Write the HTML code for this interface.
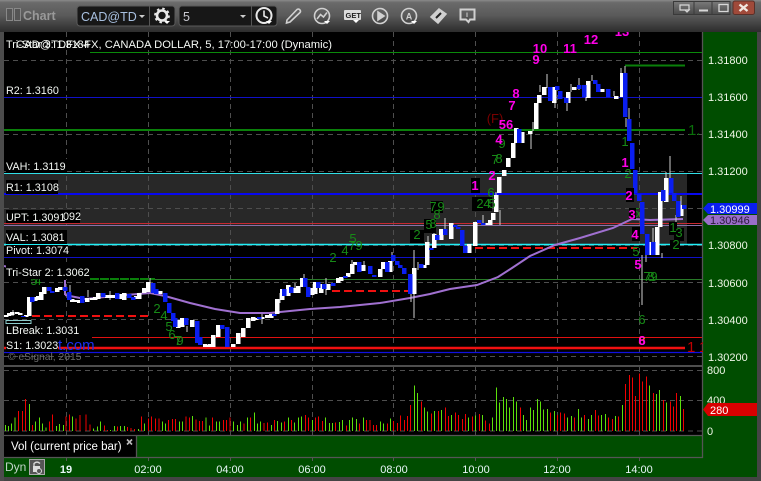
<!DOCTYPE html>
<html><head><meta charset="utf-8"><style>
html,body{margin:0;padding:0;background:#444;width:761px;height:481px;overflow:hidden}
svg{display:block;font-family:"Liberation Sans",Arial,sans-serif}
.l{font-size:10.8px;fill:#f4f8f4}
.a{font-size:11px;fill:#eef6e6}
.t{font-size:11px;fill:#e8f6f8;text-anchor:middle}
.m{font-size:13px;font-weight:bold;fill:#ff00e8;text-anchor:middle}
.g{font-size:13px;fill:#178a17;text-anchor:middle}
</style></head><body>
<svg width="761" height="481" viewBox="0 0 761 481" xmlns="http://www.w3.org/2000/svg">
<defs>
<linearGradient id="tb" x1="0" y1="0" x2="0" y2="1"><stop offset="0" stop-color="#8a8a8a"/><stop offset=".08" stop-color="#6a6a6a"/><stop offset=".48" stop-color="#5a5a5a"/><stop offset=".5" stop-color="#585858"/><stop offset="1" stop-color="#2c2c2c"/></linearGradient>
<linearGradient id="wb" x1="0" y1="0" x2="0" y2="1"><stop offset="0" stop-color="#7a7a7a"/><stop offset="1" stop-color="#4a4a4a"/></linearGradient>
<clipPath id="main"><rect x="4" y="32" width="699" height="333"/></clipPath>
</defs>
<rect width="761" height="481" fill="#444"/>
<rect width="761" height="32" fill="url(#tb)"/>
<rect x="0" y="32" width="4" height="449" fill="#4c4c4c"/>
<!-- plot -->
<rect x="4" y="32" width="699" height="333" fill="#000"/>
<rect x="4" y="367" width="699" height="68" fill="#000"/>
<rect x="703" y="32" width="54" height="445" fill="#004d00"/>
<rect x="4" y="458" width="699" height="19" fill="#004d00"/>
<rect x="137" y="436" width="566" height="21" fill="#004d00"/>
<rect x="4" y="436" width="132" height="21" fill="#000"/>
<path d="M4 366H703M4 435.5H703M136.5 436V457M4 457.5H703M702.5 32V458" stroke="#555" stroke-width="1.3" fill="none"/>
<g clip-path="url(#main)">
<rect x="4" y="173" width="683" height="72" fill="#282828"/>
<!-- grid -->
<path d="M4 60.5H703M4 134.5H703M4 171.5H703M4 208.5H703M4 245.5H703M4 282.5H703M4 319.5H703M4 356.5H703M66.5 32V366M148.5 32V366M230.5 32V366M312.5 32V366M393.5 32V366M475.5 32V366M557.5 32V366M639.5 32V366" stroke="#4e4e4e" stroke-width="1" stroke-dasharray="5 4" fill="none"/>
<!-- levels -->
<path d="M90 52.5H702" stroke="#0a8a0a"/>
<path d="M4 97.5H702" stroke="#1010c8"/>
<path d="M4 130H685" stroke="#0a800a" stroke-width="2"/>
<path d="M625 65.5H685" stroke="#0a800a" stroke-width="2"/>
<path d="M4 173.5H702" stroke="#30e0e8"/>
<path d="M4 194H702" stroke="#0808f0" stroke-width="2"/>
<path d="M4 223.5H702" stroke="#c82830"/>
<path d="M4 225.5H702" stroke="#8a70a8"/>
<path d="M4 244.5H702" stroke="#20f0f8" stroke-width="1.6"/>
<path d="M4 257.5H702" stroke="#1010c8"/>
<path d="M155 279.5H702" stroke="#287a28"/>
<path d="M90 279H155" stroke="#0a800a" stroke-width="2" stroke-dasharray="9 1"/>
<path d="M92 337.5H702" stroke="#e01010"/>
<path d="M4 348H685" stroke="#f01010" stroke-width="2.4"/>
<path d="M4 352.5H702" stroke="#1010e0" stroke-width="1.2"/>
<path d="M32 316H152M332 291H408M475 248H637" stroke="#f01010" stroke-width="2" stroke-dasharray="8 4"/>
<!-- MA -->
<path d="M4 266L8 267M65 280V295M65 295L85 299L105 297L125 295L150 293L165 296L190 303L215 309L240 313L270 313L290 311L310 309L340 307L380 303L410 298L430 294L450 289L477 285L498 277L512 268L530 256L555 245L580 238L613 228L632 219L650 220L683 219" stroke="#a070d0" stroke-width="2" fill="none"/>
<!-- wicks -->
<path shape-rendering="crispEdges" d="M13 310V316M70 285V292M88 290V297M150 278V283M110 291V300M187 326V332M326 278V295M411 294V302M414 250V318M434 223V234M445 218V232M280 293V303M295 283V288M352 260V266M364 261V265M392 252V256M418 262V270M428 236V242M500 210V225M483 215V224M262 314V324M304 274V280M531 133V149M533 122V131M547 74V88M540 85V92M555 103V108M567 103V111M571 84V92M579 78V90M592 75V81M586 97V101M614 91V96M625 66V73M621 68V74M629 108V119M626 118V127M642 255V305M646 234V262M653 228V242M670 156V178M666 172V180M676 215V231M681 196V206M639 234V240M662 253V258M496 192V196" stroke="#d0d0d0" stroke-width="1" fill="none"/>
<!-- white bodies -->
<path shape-rendering="crispEdges" d="M6 315V317M9 313V316M12 312V315M17 312V314M20 313V315M26 315V317M29 297V316M35 297V301M38 296V300M41 292V300M44 287V294M57 288V292M60 287V290M72 299V302M76 300V302M79 300V303M87 298V302M92 298V300M95 297V300M98 293V299M107 295V298M110 295V298M113 295V298M120 294V299M124 293V300M136 296V299M139 293V299M144 288V293M148 282V292M160 291V294M178 320V328M182 318V327M192 320V327M205 344V347M207 345V347M210 344V347M213 335V347M218 325V337M233 344V347M238 333V344M243 328V337M248 318V328M253 317V321M256 318V320M262 317V319M267 315V318M271 314V318M277 299V314M282 289V300M288 285V296M295 288V293M298 286V293M302 278V287M312 288V295M315 282V294M321 284V293M328 284V290M338 278V283M341 277V281M348 273V277M352 264V274M355 262V265M363 265V271M380 269V277M383 262V269M390 261V272M414 268V294M424 265V268M427 242V265M434 234V248M441 229V240M451 223V239M469 244V253M475 222V246M486 223V225M490 220V225M493 213V220M496 195V212M499 177V193M504 170V176M508 158V167M513 143V158M516 128V143M522 132V143M530 131V134M536 103V129M539 95V103M544 87V95M554 87V103M568 92V103M574 87V90M588 81V98M602 89V92M616 96V99M622 73V97M650 242V255M657 227V255M660 192V227M666 178V202M681 205V216" stroke="#fff" stroke-width="4.5" fill="none"/>
<!-- blue bodies -->
<path shape-rendering="crispEdges" d="M23 316V317M32 297V302M49 287V291M52 291V293M65 287V291M69 292V300M82 296V303M103 293V297M117 293V299M129 294V298M133 297V300M153 283V293M156 289V294M165 293V302M169 303V313M173 313V321M175 318V327M186 318V325M197 321V343M200 337V345M222 325V329M227 327V347M259 317V319M274 314V316M284 289V296M291 287V293M305 278V287M308 287V297M318 282V288M324 284V289M333 283V286M345 276V278M359 262V272M370 266V274M374 275V277M387 262V272M393 255V261M397 261V265M400 265V268M404 268V274M410 274V294M421 264V268M431 248V250M437 235V240M445 229V235M455 225V227M458 227V229M462 230V246M465 246V253M479 220V223M483 223V225M519 129V143M550 87V101M557 86V90M560 91V99M566 98V103M579 85V89M584 85V97M595 80V84M598 84V92M608 89V97M625 73V117M629 119V141M632 143V169M635 170V193M639 194V201M642 202V234M647 234V255M653 242V255M663 190V201M671 178V193M674 193V201M678 201V217M684 205V209" stroke="#0a1ef0" stroke-width="4.5" fill="none"/>
<!-- green digits -->
<g class="g">
<rect x="431" y="201" width="12" height="12" fill="#000"/><rect x="410" y="230" width="14" height="13" fill="#000"/><rect x="472" y="197" width="20" height="14" fill="#000"/><rect x="424" y="219" width="12" height="14" fill="#000"/>
<text x="34" y="285">5</text><text x="38" y="285">4</text><text x="157" y="313">2</text><text x="164" y="320">4</text><text x="169" y="331">5</text><text x="172" y="339">6</text><text x="178" y="345">7</text><text x="180" y="345">9</text>
<text x="333" y="262">2</text><text x="345" y="255">4</text><text x="353" y="243">5</text><text x="352" y="250">7</text><text x="359" y="250">9</text>
<text x="417" y="239">2</text><text x="429" y="229">5</text><text x="433" y="228">8</text><text x="433" y="211">7</text><text x="441" y="211">9</text><text x="437" y="219">8</text>
<text x="480" y="208">2</text><text x="487" y="208">4</text><text x="492" y="208">5</text><text x="491" y="197">6</text><text x="495" y="164">7</text><text x="499" y="163">8</text><text x="502" y="148">9</text>
<text x="625" y="146">1</text><text x="628" y="178">2</text><text x="632" y="197">4</text><text x="636" y="217">5</text><text x="636" y="256">5</text>
<text x="642" y="324">6</text><text x="647" y="281">7</text><text x="651" y="281">8</text><text x="654" y="281">9</text>
</g>
<rect x="669" y="222" width="8" height="13" fill="#000"/><rect x="674" y="228" width="10" height="13" fill="#000"/><rect x="670" y="240" width="10" height="12" fill="#000"/>
<g class="g"><text x="673" y="232">1</text><text x="679" y="237">3</text><text x="676" y="249">2</text></g>
<text x="688" y="135" font-size="15" fill="#0a700a">1.</text>
<text x="687" y="352" font-size="15" fill="#c00000">1</text>
<text x="699" y="352" font-size="15" fill="#c00000">1</text>
<text x="495" y="123" font-size="13" fill="#7a0000" text-anchor="middle">(F)</text>
<!-- magenta digits -->
<rect x="471" y="178" width="9" height="15" fill="#000"/><rect x="626" y="188" width="8" height="14" fill="#000"/><rect x="629" y="208" width="7" height="11" fill="#000"/><rect x="632" y="227" width="8" height="14" fill="#000"/>
<g class="m">
<text x="540" y="53">10</text><text x="536" y="64">9</text><text x="570" y="53">11</text><text x="591" y="44">12</text><text x="622" y="36">13</text><text x="516" y="98">8</text><text x="512" y="110">7</text><text x="506" y="129">56</text><text x="499" y="144">4</text><text x="492" y="180">2</text><text x="475" y="190">1</text><text x="625" y="167">1</text><text x="629" y="200">2</text><text x="632" y="219">3</text><text x="635" y="239">4</text><text x="638" y="269">5</text>
<text x="642" y="345" style="fill:#f07000">8</text><text x="642" y="345">6</text>
</g>
<!-- left labels -->
<g fill="#000"><rect x="6" y="159" width="61" height="14"/><rect x="6" y="180" width="52" height="14"/><rect x="6" y="210" width="74" height="13"/><rect x="6" y="230" width="61" height="14"/><rect x="6" y="245" width="62" height="12"/><rect x="6" y="265" width="84" height="14"/><rect x="6" y="323" width="73" height="14"/><rect x="6" y="338" width="52" height="14"/></g>
<text x="6" y="48" class="l">Tri-Star 3: 1.3184</text>
<text x="16" y="48" class="l" textLength="316" lengthAdjust="spacingAndGlyphs">CAD@TDFX-FX, CANADA DOLLAR, 5, 17:00-17:00 (Dynamic)</text>
<text x="6" y="94" class="l">R2: 1.3160</text>
<text x="6" y="170" class="l">VAH: 1.3119</text>
<text x="6" y="191" class="l">R1: 1.3108</text>
<text x="6" y="221" class="l">UPT: 1.3091</text>
<text x="63" y="220" class="l">092</text>
<text x="6" y="241" class="l">VAL: 1.3081</text>
<text x="6" y="254" class="l">Pivot: 1.3074</text>
<text x="6" y="276" class="l">Tri-Star 2: 1.3062</text>
<path d="M6 320.500H31V323.500H6Z" fill="none" stroke="#8ccccc"/>
<text x="6" y="334" class="l">LBreak: 1.3031</text>
<text x="6" y="349" class="l">S1: 1.3023</text>
<text x="58" y="350" font-size="15" fill="#1a2ef0">t.com</text>
<text x="8" y="360" font-size="10.300" fill="#6c6c6c">© eSignal, 2015</text>
</g>
<!-- volume grid -->
<path d="M4 370.500H703M4 400.500H703M4 431H703M66.500 367V435M148.500 367V435M230.500 367V435M312.500 367V435M393.500 367V435M475.500 367V435M557.500 367V435M639.500 367V435" stroke="#4e4e4e" stroke-dasharray="5 4" fill="none"/>
<!-- volume bars in 3x coordinates -->
<g transform="translate(0,365) scale(.33333)" stroke-width="3.300" fill="none" shape-rendering="crispEdges">
<path stroke="#f00000" d="M55 138V198M67 138V198M76 102V198M98 180V198M148 170V198M157 148V198M198 155V198M208 148V198M228 160V198M240 150V198M258 148V198M270 178V198M313 182V198M323 195V198M352 184V198M382 186V198M393 189V198M403 192V198M425 155V198M445 160V198M455 155V198M466 160V198M477 160V198M505 165V198M518 162V198M527 162V198M558 155V198M568 157V198M588 163V198M598 168V198M608 168V198M638 158V198M670 165V198M680 165V198M690 158V198M732 175V198"/>
<path stroke="#5ce00a" d="M16 180V198M25 183V198M34 175V198M45 158V198M88 117V198M107 170V198M118 158V198M128 175V198M138 188V198M169 183V198M178 177V198M190 180V198M218 155V198M280 190V198M292 185V198M302 170V198M332 195V198M343 183V198M362 183V198M373 183V198M415 192V198M434 175V198M487 170V198M497 175V198M538 170V198M548 170V198M577 153V198M618 158V198M628 182V198M650 170V198M658 170V198M700 170V198M712 180V198M722 170V198M743 158V198"/>
</g>
<g transform="translate(250,365) scale(.33333)" stroke-width="3.300" fill="none" shape-rendering="crispEdges">
<path stroke="#f00000" d="M2 158V198M42 174V198M52 173V198M73 165V198M103 170V198M125 165V198M166 150V198M176 158V198M197 158V198M206 155V198M217 168V198M257 173V198M289 182V198M328 176V198M349 165V198M360 165V198M370 180V198M380 180V198M412 176V198M431 168V198M442 174V198M452 152V198M463 165V198M472 153V198M482 120V198M514 110V198M545 146V198M565 138V198M586 128V198M595 153V198M616 142V198M626 150V198M637 162V198M646 147V198M667 155V198M688 147V198M706 167V198M718 175V198"/>
<path stroke="#5ce00a" d="M13 143V198M22 175V198M32 170V198M64 180V198M83 168V198M94 173V198M115 158V198M134 173V198M145 158V198M155 155V198M187 165V198M226 158V198M238 174V198M248 174V198M268 171V198M277 165V198M298 165V198M308 158V198M319 162V198M340 158V198M391 170V198M400 176V198M421 161V198M493 62V198M503 84V198M524 128V198M533 140V198M553 138V198M574 135V198M605 150V198M656 158V198M677 152V198M697 150V198M727 158V198M740 68V198M748 112V198"/>
</g>
<g transform="translate(500,365) scale(.33333)" stroke-width="3.300" fill="none" shape-rendering="crispEdges">
<path stroke="#f00000" d="M61 128V198M151 143V198M172 150V198M181 143V198M193 145V198M223 158V198M254 150V198M286 135V198M295 152V198M325 158V198M337 162V198M356 155V198M377 57V198M388 30V198M397 38V198M407 93V198M418 25V198M428 50V198M439 35V198M460 84V198M491 105V198M511 110V198M520 125V198M530 84V198M550 132V198"/>
<path stroke="#5ce00a" d="M10 96V198M19 102V198M28 128V198M40 96V198M49 110V198M70 150V198M80 165V198M91 128V198M100 135V198M112 102V198M121 110V198M130 134V198M142 132V198M163 138V198M203 158V198M214 153V198M235 132V198M244 158V198M265 162V198M274 150V198M305 150V198M316 147V198M347 153V198M367 120V198M449 62V198M470 87V198M479 75V198M500 113V198M541 93V198"/>
</g>
<!-- right axis -->
<g class="a">
<text x="708" y="64">1.31800</text><text x="708" y="101">1.31600</text><text x="708" y="138">1.31400</text><text x="708" y="175">1.31200</text><text x="708" y="249">1.30800</text><text x="708" y="287">1.30600</text><text x="708" y="324">1.30400</text><text x="708" y="361">1.30200</text>
<text x="707" y="374">800</text><text x="707" y="404">400</text><text x="707" y="435">0</text>
</g>
<path d="M703 220L708 215H757V225H708Z" fill="#9a6fc8"/>
<text x="710" y="224" font-size="11" fill="#2a1a3a">1.30946</text>
<path d="M703 208.500L708 203H757V214H708Z" fill="#0a1ef0"/>
<text x="710" y="213" font-size="11" fill="#fff">1.30999</text>
<path d="M703 409.500L708 403H757V416H708Z" fill="#d80000"/>
<text x="710" y="414" font-size="11" fill="#fff">280</text>
<!-- bottom -->
<path d="M66.500 458V461M148.500 458V461M230.500 458V461M312.500 458V461M393.500 458V461M475.500 458V461M557.500 458V461M639.500 458V461" stroke="#555"/>
<text x="66" y="473" class="t" style="font-weight:bold">19</text>
<text x="148" y="473" class="t">02:00</text><text x="230" y="473" class="t">04:00</text><text x="312" y="473" class="t">06:00</text><text x="394" y="473" class="t">08:00</text><text x="476" y="473" class="t">10:00</text><text x="557" y="473" class="t">12:00</text><text x="639" y="473" class="t">14:00</text>
<text x="5" y="471" font-size="12" fill="#c0d4c8">Dyn</text>
<rect x="29.500" y="459.500" width="15" height="15" fill="#555" stroke="#aaa"/>
<path d="M34 466V463.500Q37 460.500 40 463.500" stroke="#ddd" stroke-width="1.300" fill="none"/><rect x="33" y="466" width="7" height="6" fill="#ddd"/><circle cx="39" cy="471" r="2.500" fill="#555" stroke="#ddd"/>
<text x="11" y="450" font-size="11.500" fill="#fff">Vol (current price bar)</text>
<path d="M127 439.500L132 444.500M132 439.500L127 444.500" stroke="#bbb" stroke-width="1.600"/>
<!-- toolbar -->
<rect x="6.500" y="8.500" width="6" height="12" fill="#555" stroke="#888"/><rect x="14.500" y="8.500" width="6" height="12" fill="#555" stroke="#888"/>
<text x="23" y="20" font-size="12.500" font-weight="bold" fill="#999">Chart</text>
<rect x="77" y="6" width="98" height="20" rx="3" fill="#171717" stroke="#5a5a5a"/>
<rect x="179" y="6" width="98" height="20" rx="3" fill="#171717" stroke="#5a5a5a"/>
<path d="M149.500 6V26M251.500 6V26" stroke="#555"/>
<text x="81" y="21" font-size="12.500" fill="#a8c0e0">CAD@TD</text>
<text x="183" y="21" font-size="12.500" fill="#c8c8d0">5</text>
<path d="M139 15H145L142 18ZM240 15H246L243 18Z" fill="#ccc"/>
<circle cx="162" cy="15.500" r="5" fill="none" stroke="#e8e8e8" stroke-width="2.600"/><circle cx="162" cy="15.500" r="7" fill="none" stroke="#e8e8e8" stroke-width="1.800" stroke-dasharray="2.500 3"/>
<path d="M164 21H170L167 24Z" fill="#fff"/>
<circle cx="264" cy="15.500" r="7.500" fill="none" stroke="#e8e8e8" stroke-width="2"/><path d="M264 10.500V16L268 18" stroke="#e8e8e8" stroke-width="1.600" fill="none"/>
<path d="M266 21H272L269 24Z" fill="#fff"/>
<g fill="none" stroke="#d0d0d0" stroke-width="1.600">
<path d="M287 20L297 9.500Q299 8.500 300 10Q301 11.500 300 12.500L290 22L286.500 23Z"/>
<circle cx="322" cy="16" r="7.500"/><path d="M317 19L320.500 14.500L323.500 17L327 12.500"/>
<circle cx="380" cy="16" r="7.500"/><path d="M378 12V20L384 16Z" fill="#d0d0d0"/>
<circle cx="409" cy="16" r="7.500"/>
<path d="M431 17L439 9L446 14L438 23Z" fill="#d0d0d0"/>
<path d="M460.500 9.500H474.500V19.500H470L468.500 22L466 19.500H460.500Z" stroke-width="2"/>
</g>
<path d="M324 21H330L327 24ZM353 20H359L356 23ZM411 21H417L414 24Z" fill="#fff"/>
<rect x="344" y="10" width="17" height="10" rx="1" fill="#ddd"/>
<text x="345.500" y="18" font-size="7.500" font-weight="bold" fill="#222">GET</text>
<text x="409" y="19.500" font-size="9" font-weight="bold" fill="#d0d0d0" text-anchor="middle">A</text>
<path d="M467 12.500V17" stroke="#d0d0d0"/>
<path d="M436 18L441 13" stroke="#222" stroke-width="2"/>
<!-- window buttons -->
<rect x="673.500" y="1.500" width="27" height="13" fill="url(#wb)" stroke="#3a3a3a"/>
<rect x="694" y="1.500" width="18" height="13" fill="url(#wb)" stroke="#3a3a3a"/>
<rect x="712" y="1.500" width="18" height="13" fill="url(#wb)" stroke="#3a3a3a"/>
<rect x="733" y="1" width="21.500" height="13.500" rx="2" fill="#a04a3a" stroke="#5a3028"/>
<path d="M680 5H689V10H680ZM685 10H689L687 12Z" stroke="#d8d8d8" fill="none" stroke-width="1.200"/>
<path d="M699 10.500H708" stroke="#d8d8d8" stroke-width="2"/>
<rect x="719" y="4.500" width="9" height="7" fill="none" stroke="#d8d8d8" stroke-width="1.300"/>
<path d="M739.500 4.500L747.500 11M747.500 4.500L739.500 11" stroke="#f0e8e0" stroke-width="2.400"/>
</svg>
</body></html>
